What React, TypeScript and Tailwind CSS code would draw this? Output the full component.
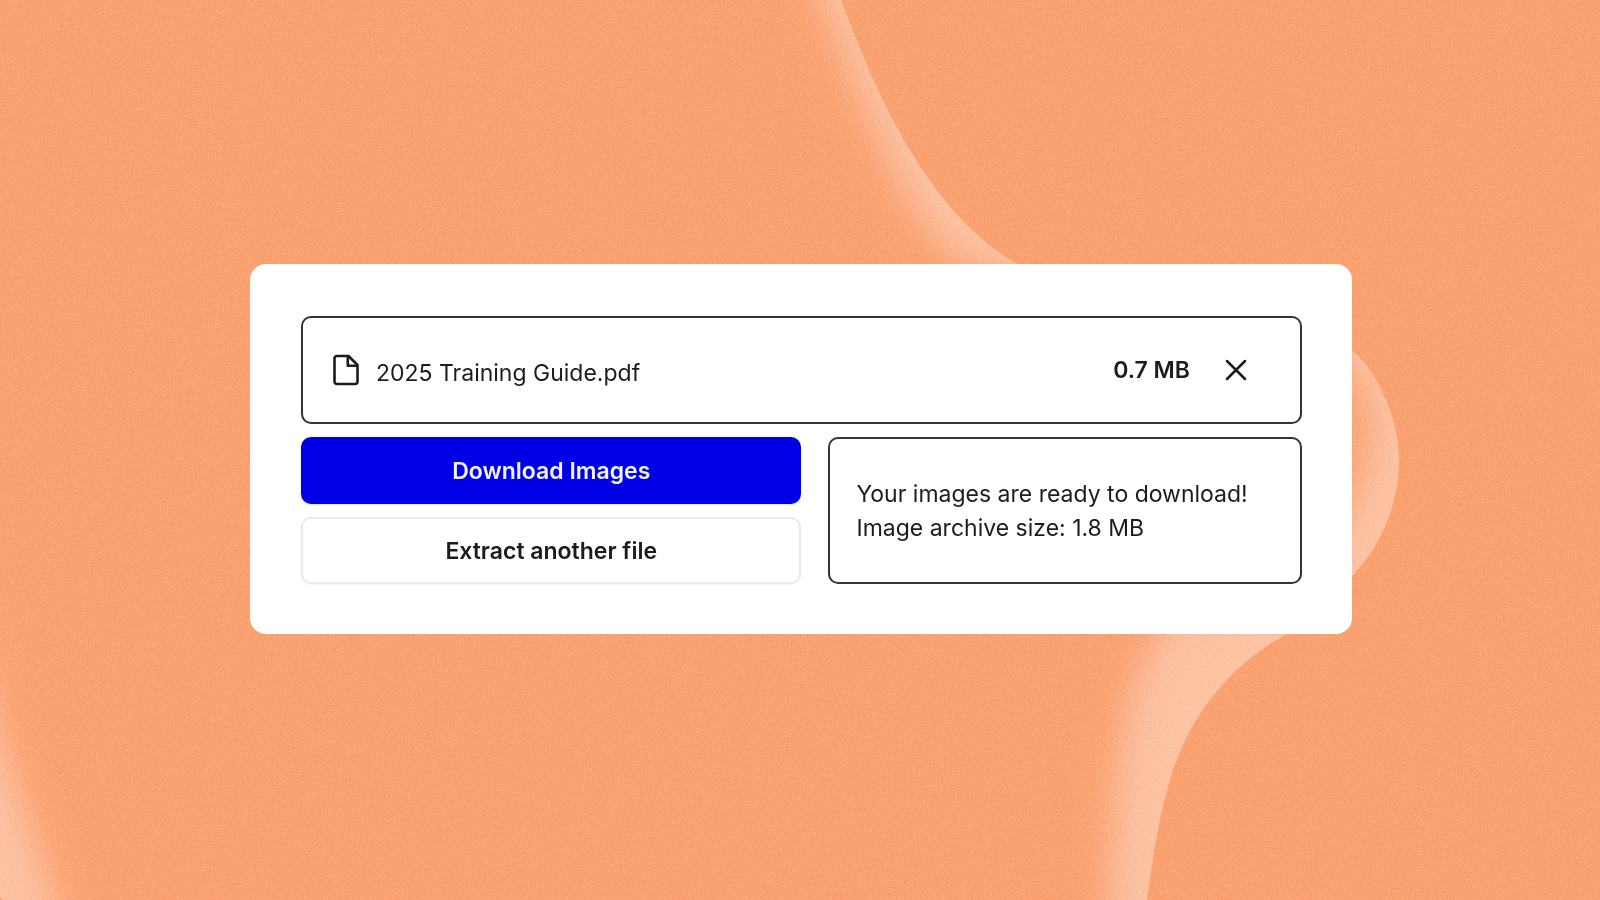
const outerEdge = "C875 90 925 210 1017 264 C1130 320 1290 290 1352 350 C1380 375 1399 420 1399 460 C1399 505 1380 548 1352 576 C1330 600 1310 618 1285 635 C1225 668 1190 720 1173 770 C1160 810 1153 855 1147 900"

function Backdrop() {
    return (
        <svg
            className="absolute inset-0 h-full w-full"
            viewBox="0 0 1600 900"
            preserveAspectRatio="xMidYMid slice"
            aria-hidden="true"
        >
            <defs>
                <clipPath id="blob">
                    <path d={`M0 0H841 ${outerEdge} H2 L0 896Z`} />
                </clipPath>
                <filter id="soft" x="-20%" y="-20%" width="140%" height="140%" colorInterpolationFilters="sRGB">
                    <feGaussianBlur stdDeviation="17" />
                </filter>
                <filter id="grain" x="0" y="0" width="100%" height="100%" colorInterpolationFilters="sRGB">
                    <feTurbulence type="fractalNoise" baseFrequency="0.7" numOctaves="2" seed="4" />
                    <feColorMatrix
                        type="matrix"
                        values="1.6 0 0 0 -0.3  1.6 0 0 0 -0.3  1.6 0 0 0 -0.3  0 0 0 0 1"
                    />
                </filter>
            </defs>
            <rect width="1600" height="900" fill="#faa271" />
            <g clipPath="url(#blob)">
                <rect width="1600" height="900" fill="#fcc3a3" />
                <path
                    d="M-200 -100H780L826 10C858 90 890 185 945 250C1060 320 1300 290 1360 385C1385 430 1365 520 1290 570C1240 600 1190 590 1155 640C1122 690 1110 780 1108 980H80C50 880 22 800 0 735L-60 500Z"
                    fill="#faa271"
                    filter="url(#soft)"
                />
            </g>
            <rect width="1600" height="900" filter="url(#grain)" opacity="0.25" className="mix-blend-soft-light" />
        </svg>
    )
}

function FileIcon() {
    return (
        <svg className="h-8 w-7 shrink-0" viewBox="0 0 28 32" fill="none" stroke="currentColor" strokeWidth="2.6" strokeLinejoin="round" aria-hidden="true">
            <path d="M5 2H16.5L25.5 11V27.5a2.5 2.5 0 0 1-2.5 2.5H5A2.5 2.5 0 0 1 2.5 27.5V4.5A2.5 2.5 0 0 1 5 2Z" />
            <path d="M15.8 2.5V11.7H25" />
        </svg>
    )
}

function CloseIcon() {
    return (
        <svg className="h-6 w-6" viewBox="0 0 24 24" fill="none" stroke="currentColor" strokeWidth="2.5" strokeLinecap="round" aria-hidden="true">
            <path d="M3 3L21 21M21 3L3 21" />
        </svg>
    )
}

export default function App() {
    return (
        <div className="relative flex min-h-screen items-center justify-center overflow-hidden bg-[#faa271] pb-0.5 pl-0.5 font-['Inter',sans-serif] text-[23px] leading-8 text-[#1c1c20]">
            <Backdrop />
            <main className="relative w-full max-w-[1102px] rounded-2xl bg-white pt-[52px] pr-[50px] pb-[50px] pl-[51px]">
                <div className="flex items-center justify-between rounded-[10px] border-2 border-[#333338] py-[33px] pr-[52px] pl-[29px]">
                    <div className="flex items-center gap-4">
                        <FileIcon />
                        <p className="pt-1.5">2025 Training Guide.pdf</p>
                    </div>
                    <div className="flex items-center gap-[34px]">
                        <p className="font-semibold">0.7 MB</p>
                        <button type="button" aria-label="Remove file">
                            <CloseIcon />
                        </button>
                    </div>
                </div>
                <div className="mt-[13px] grid grid-cols-[501fr_474fr] gap-[27px]">
                    <div className="flex flex-col gap-[13px]">
                        <button type="button" className="h-[67px] rounded-[10px] bg-[#0000e6] font-semibold text-[#f2f2ff] shadow-sm">
                            Download Images
                        </button>
                        <button type="button" className="h-[67px] rounded-[10px] border-2 border-[#e9e9eb] font-semibold shadow-xs">
                            Extract another file
                        </button>
                    </div>
                    <div className="flex flex-col justify-center rounded-[10px] border-2 border-[#333338] px-[26px] leading-[34px]">
                        <p>Your images are ready to download!</p>
                        <p>Image archive size: 1.8 MB</p>
                    </div>
                </div>
            </main>
        </div>
    )
}
